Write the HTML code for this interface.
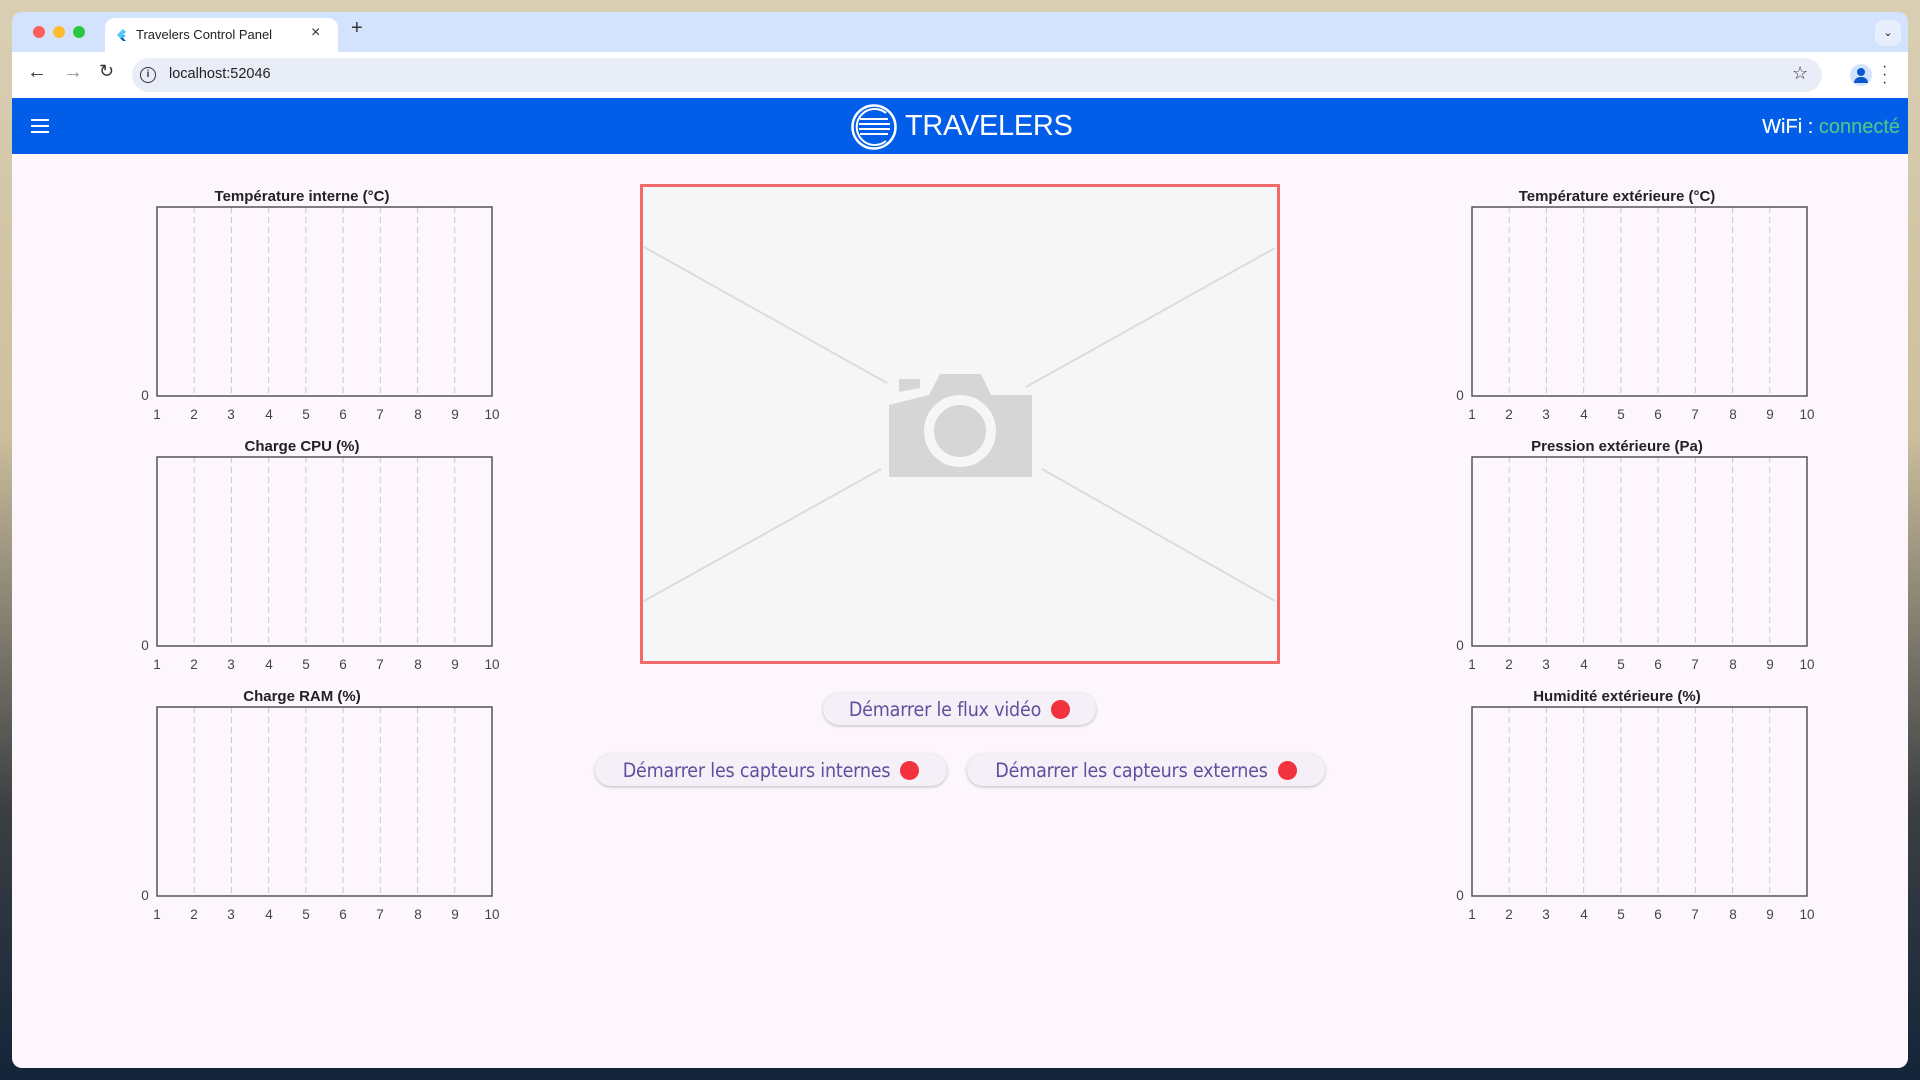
<!DOCTYPE html>
<html><head><meta charset="utf-8"><style>
*{margin:0;padding:0;box-sizing:border-box}
body{width:1920px;height:1080px;overflow:hidden;position:relative;font-family:"Liberation Sans",sans-serif;background:linear-gradient(180deg,#d9cfb3 0%,#cdbf9e 40%,#3b3f42 75%,#14243a 100%)}
.win{position:absolute;left:12px;top:12px;width:1896px;height:1056px;border-radius:10px;overflow:hidden;background:#fdf7fd}
.tabbar{position:absolute;left:0;top:0;width:100%;height:40px;background:#d3e3fd}
.tab{position:absolute;left:93px;top:6px;width:233px;height:34px;background:#fff;border-radius:10px 10px 0 0}
.addr{position:absolute;left:0;top:40px;width:100%;height:46px;background:#fff}
.omni{position:absolute;left:120px;top:6px;width:1690px;height:34px;border-radius:17px;background:#e9edf7}
.hdr{position:absolute;left:0;top:86px;width:100%;height:56px;background:#025ee8}
.abs{position:absolute}
.btn{position:absolute;height:32px;border-radius:16px;background:#f5eff7;box-shadow:0 1px 3px rgba(0,0,0,.25);color:#5f4f9e;font-size:19.5px;letter-spacing:-0.2px;font-family:"DejaVu Sans Condensed","Liberation Sans",sans-serif;display:flex;align-items:center;justify-content:center;gap:10px}
.dot{width:19px;height:19px;border-radius:50%;background:#f2333e;display:inline-block}
svg text{font-family:"Liberation Sans",sans-serif}
.t{font-weight:bold;fill:#222}
</style></head><body>
<div class="win">
 <div class="tabbar">
  <div class="abs" style="left:21px;top:14px;width:12px;height:12px;border-radius:50%;background:#fe5f57"></div>
  <div class="abs" style="left:41px;top:14px;width:12px;height:12px;border-radius:50%;background:#febc2e"></div>
  <div class="abs" style="left:61px;top:14px;width:12px;height:12px;border-radius:50%;background:#28c840"></div>
  <div class="tab">
   <svg class="abs" style="left:10px;top:10px" width="12" height="14" viewBox="0 0 12 14"><path d="M8 1L2 7l3 3 6-6z" fill="#54c5f8"/><path d="M5 10l3 3h3L8 10z" fill="#01579b"/><path d="M5 10l3-3h3l-3 3z" fill="#29b6f6"/></svg>
   <div class="abs" style="left:31px;top:9px;font-size:13px;color:#222">Travelers Control Panel</div>
   <div class="abs" style="left:206px;top:6px;font-size:16px;color:#333">×</div>
  </div>
  <div class="abs" style="left:339px;top:5px;font-size:20px;color:#333">+</div>
  <div class="abs" style="left:1863px;top:8px;width:26px;height:26px;border-radius:8px;background:#e6eefb;font-size:11px;text-align:center;line-height:26px;color:#222">⌄</div>
 </div>
 <div class="addr">
  <div class="abs" style="left:15px;top:9px;font-size:20px;color:#333">←</div>
  <div class="abs" style="left:51px;top:9px;font-size:20px;color:#999">→</div>
  <div class="abs" style="left:87px;top:9px;font-size:18px;color:#333">↻</div>
  <div class="omni">
   <div class="abs" style="left:8px;top:9px;width:16px;height:16px;border-radius:50%;border:1.8px solid #333;font-size:10px;text-align:center;line-height:13px;font-weight:bold;color:#333">i</div>
   <div class="abs" style="left:37px;top:8px;font-size:14.5px;color:#222">localhost:52046</div>
   <div class="abs" style="left:1660px;top:5px;font-size:18px;color:#333">☆</div>
  </div>
  <div class="abs" style="left:1838px;top:12px;width:22px;height:22px;border-radius:50%;background:#d3e3fd"></div>
  <div class="abs" style="left:1845px;top:16px;width:8px;height:8px;border-radius:50%;background:#0b57d0"></div>
  <div class="abs" style="left:1842px;top:25px;width:14px;height:6px;border-radius:7px 7px 0 0;background:#0b57d0"></div>
  <div class="abs" style="left:1870px;top:11px;font-size:16px;color:#333;line-height:8px">·<br>·<br>·</div>
 </div>
 <div class="hdr">
  <div class="abs" style="left:19px;top:21px;width:18px;height:2px;background:#fff;box-shadow:0 6px 0 #fff,0 12px 0 #fff"></div>
  <svg class="abs" style="left:838px;top:5px" width="48" height="48" viewBox="0 0 48 48"><circle cx="24" cy="24" r="21.5" fill="none" stroke="#fff" stroke-width="2.5"/><path d="M36 10A18 18 0 1 0 36 38" fill="none" stroke="#fff" stroke-width="2"/><g stroke="#fff" stroke-width="2"><line x1="10" y1="16" x2="38" y2="16"/><line x1="9" y1="21" x2="40" y2="21"/><line x1="9" y1="26" x2="40" y2="26"/><line x1="10" y1="31" x2="38" y2="31"/></g></svg>
  <div class="abs" style="left:893px;top:12px;font-size:29px;color:#fff;letter-spacing:-0.3px">TRAVELERS</div>
  <div class="abs" style="right:8px;top:18px;font-size:20px;color:#fff;font-weight:500;text-shadow:0 0 0.4px #fff">WiFi : <span style="color:#4cc38a;text-shadow:0 0 0.4px #4cc38a">connecté</span></div>
 </div>
</div>

<svg class="abs" style="left:130px;top:190px" width="380" height="235">
 <text class="t" x="172" y="11" font-size="15" text-anchor="middle">Température interne (°C)</text>
 <g stroke="#c8c8c8" stroke-dasharray="6,4"><line x1="64.2" y1="17" x2="64.2" y2="206"/><line x1="101.4" y1="17" x2="101.4" y2="206"/><line x1="138.7" y1="17" x2="138.7" y2="206"/><line x1="175.9" y1="17" x2="175.9" y2="206"/><line x1="213.1" y1="17" x2="213.1" y2="206"/><line x1="250.3" y1="17" x2="250.3" y2="206"/><line x1="287.6" y1="17" x2="287.6" y2="206"/><line x1="324.8" y1="17" x2="324.8" y2="206"/></g>
 <rect x="27" y="17" width="335" height="189" fill="none" stroke="#555" stroke-width="1.5"/>
 <g font-size="13.5" fill="#444" text-anchor="middle"><text x="15" y="210">0</text><text x="27" y="229">1</text><text x="64" y="229">2</text><text x="101" y="229">3</text><text x="139" y="229">4</text><text x="176" y="229">5</text><text x="213" y="229">6</text><text x="250" y="229">7</text><text x="288" y="229">8</text><text x="325" y="229">9</text><text x="362" y="229">10</text></g>
</svg>
<svg class="abs" style="left:130px;top:440px" width="380" height="235">
 <text class="t" x="172" y="11" font-size="15" text-anchor="middle">Charge CPU (%)</text>
 <g stroke="#c8c8c8" stroke-dasharray="6,4"><line x1="64.2" y1="17" x2="64.2" y2="206"/><line x1="101.4" y1="17" x2="101.4" y2="206"/><line x1="138.7" y1="17" x2="138.7" y2="206"/><line x1="175.9" y1="17" x2="175.9" y2="206"/><line x1="213.1" y1="17" x2="213.1" y2="206"/><line x1="250.3" y1="17" x2="250.3" y2="206"/><line x1="287.6" y1="17" x2="287.6" y2="206"/><line x1="324.8" y1="17" x2="324.8" y2="206"/></g>
 <rect x="27" y="17" width="335" height="189" fill="none" stroke="#555" stroke-width="1.5"/>
 <g font-size="13.5" fill="#444" text-anchor="middle"><text x="15" y="210">0</text><text x="27" y="229">1</text><text x="64" y="229">2</text><text x="101" y="229">3</text><text x="139" y="229">4</text><text x="176" y="229">5</text><text x="213" y="229">6</text><text x="250" y="229">7</text><text x="288" y="229">8</text><text x="325" y="229">9</text><text x="362" y="229">10</text></g>
</svg>
<svg class="abs" style="left:130px;top:690px" width="380" height="235">
 <text class="t" x="172" y="11" font-size="15" text-anchor="middle">Charge RAM (%)</text>
 <g stroke="#c8c8c8" stroke-dasharray="6,4"><line x1="64.2" y1="17" x2="64.2" y2="206"/><line x1="101.4" y1="17" x2="101.4" y2="206"/><line x1="138.7" y1="17" x2="138.7" y2="206"/><line x1="175.9" y1="17" x2="175.9" y2="206"/><line x1="213.1" y1="17" x2="213.1" y2="206"/><line x1="250.3" y1="17" x2="250.3" y2="206"/><line x1="287.6" y1="17" x2="287.6" y2="206"/><line x1="324.8" y1="17" x2="324.8" y2="206"/></g>
 <rect x="27" y="17" width="335" height="189" fill="none" stroke="#555" stroke-width="1.5"/>
 <g font-size="13.5" fill="#444" text-anchor="middle"><text x="15" y="210">0</text><text x="27" y="229">1</text><text x="64" y="229">2</text><text x="101" y="229">3</text><text x="139" y="229">4</text><text x="176" y="229">5</text><text x="213" y="229">6</text><text x="250" y="229">7</text><text x="288" y="229">8</text><text x="325" y="229">9</text><text x="362" y="229">10</text></g>
</svg>
<svg class="abs" style="left:1445px;top:190px" width="380" height="235">
 <text class="t" x="172" y="11" font-size="15" text-anchor="middle">Température extérieure (°C)</text>
 <g stroke="#c8c8c8" stroke-dasharray="6,4"><line x1="64.2" y1="17" x2="64.2" y2="206"/><line x1="101.4" y1="17" x2="101.4" y2="206"/><line x1="138.7" y1="17" x2="138.7" y2="206"/><line x1="175.9" y1="17" x2="175.9" y2="206"/><line x1="213.1" y1="17" x2="213.1" y2="206"/><line x1="250.3" y1="17" x2="250.3" y2="206"/><line x1="287.6" y1="17" x2="287.6" y2="206"/><line x1="324.8" y1="17" x2="324.8" y2="206"/></g>
 <rect x="27" y="17" width="335" height="189" fill="none" stroke="#555" stroke-width="1.5"/>
 <g font-size="13.5" fill="#444" text-anchor="middle"><text x="15" y="210">0</text><text x="27" y="229">1</text><text x="64" y="229">2</text><text x="101" y="229">3</text><text x="139" y="229">4</text><text x="176" y="229">5</text><text x="213" y="229">6</text><text x="250" y="229">7</text><text x="288" y="229">8</text><text x="325" y="229">9</text><text x="362" y="229">10</text></g>
</svg>
<svg class="abs" style="left:1445px;top:440px" width="380" height="235">
 <text class="t" x="172" y="11" font-size="15" text-anchor="middle">Pression extérieure (Pa)</text>
 <g stroke="#c8c8c8" stroke-dasharray="6,4"><line x1="64.2" y1="17" x2="64.2" y2="206"/><line x1="101.4" y1="17" x2="101.4" y2="206"/><line x1="138.7" y1="17" x2="138.7" y2="206"/><line x1="175.9" y1="17" x2="175.9" y2="206"/><line x1="213.1" y1="17" x2="213.1" y2="206"/><line x1="250.3" y1="17" x2="250.3" y2="206"/><line x1="287.6" y1="17" x2="287.6" y2="206"/><line x1="324.8" y1="17" x2="324.8" y2="206"/></g>
 <rect x="27" y="17" width="335" height="189" fill="none" stroke="#555" stroke-width="1.5"/>
 <g font-size="13.5" fill="#444" text-anchor="middle"><text x="15" y="210">0</text><text x="27" y="229">1</text><text x="64" y="229">2</text><text x="101" y="229">3</text><text x="139" y="229">4</text><text x="176" y="229">5</text><text x="213" y="229">6</text><text x="250" y="229">7</text><text x="288" y="229">8</text><text x="325" y="229">9</text><text x="362" y="229">10</text></g>
</svg>
<svg class="abs" style="left:1445px;top:690px" width="380" height="235">
 <text class="t" x="172" y="11" font-size="15" text-anchor="middle">Humidité extérieure (%)</text>
 <g stroke="#c8c8c8" stroke-dasharray="6,4"><line x1="64.2" y1="17" x2="64.2" y2="206"/><line x1="101.4" y1="17" x2="101.4" y2="206"/><line x1="138.7" y1="17" x2="138.7" y2="206"/><line x1="175.9" y1="17" x2="175.9" y2="206"/><line x1="213.1" y1="17" x2="213.1" y2="206"/><line x1="250.3" y1="17" x2="250.3" y2="206"/><line x1="287.6" y1="17" x2="287.6" y2="206"/><line x1="324.8" y1="17" x2="324.8" y2="206"/></g>
 <rect x="27" y="17" width="335" height="189" fill="none" stroke="#555" stroke-width="1.5"/>
 <g font-size="13.5" fill="#444" text-anchor="middle"><text x="15" y="210">0</text><text x="27" y="229">1</text><text x="64" y="229">2</text><text x="101" y="229">3</text><text x="139" y="229">4</text><text x="176" y="229">5</text><text x="213" y="229">6</text><text x="250" y="229">7</text><text x="288" y="229">8</text><text x="325" y="229">9</text><text x="362" y="229">10</text></g>
</svg>

<svg class="abs" style="left:640px;top:184px" width="640" height="480" viewBox="640 184 640 480">
 <rect x="641.5" y="185.5" width="637" height="477" fill="#f6f6f6" stroke="#f06c6c" stroke-width="3"/>
 <g stroke="#dcdcdc" stroke-width="2"><line x1="644" y1="247" x2="887" y2="383"/><line x1="1275" y1="248" x2="1026" y2="387"/><line x1="644" y1="601" x2="881" y2="469"/><line x1="1042" y1="469" x2="1275" y2="601"/></g>
 <path d="M889 405L929 395L940 374H981L991 395H1032V477H889Z" fill="#d6d6d6"/>
 <path d="M899 379H920V388L899 392Z" fill="#d6d6d6"/>
 <circle cx="960" cy="431" r="31" fill="none" stroke="#f6f6f6" stroke-width="10"/>
</svg>

<div class="btn" style="left:823px;top:693px;width:273px">Démarrer le flux vidéo <span class="dot"></span></div>
<div class="btn" style="left:595px;top:754px;width:352px">Démarrer les capteurs internes <span class="dot"></span></div>
<div class="btn" style="left:967px;top:754px;width:358px">Démarrer les capteurs externes <span class="dot"></span></div>
</body></html>
